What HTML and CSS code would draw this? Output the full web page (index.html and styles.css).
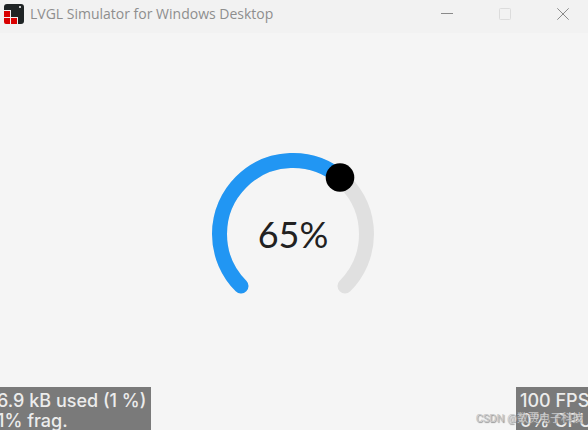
FILE: index.html
```
<!DOCTYPE html>
<html lang="en">
<head>
    <meta charset="UTF-8">
    <meta name="viewport" content="width=device-width, initial-scale=1.0">
    <title>LVGL Simulator for Windows Desktop</title>
    <link rel="stylesheet" href="styles.css">
</head>
<body>
    <header class="titlebar">
        <svg class="logo" viewBox="0 0 20 20" aria-hidden="true">
            <rect x="0" y="0" width="20" height="20" rx="3" fill="#1f2425"/>
            <rect x="15" y="2" width="2" height="2" rx="1" fill="#fff"/>
            <path d="M0 6H7V13H14V20H0Z" fill="#f2f2f2"/>
            <path d="M0 7H6V13H0ZM0 14H6V20H2Q0 20 0 18ZM7 14H13V20H7Z" fill="#d90000"/>
        </svg>
        <h1 class="title">LVGL Simulator for Windows Desktop</h1>
        <div class="window-buttons">
            <button type="button" aria-label="Minimize">
                <svg viewBox="0 0 12 12"><path d="M0 5.5H12"/></svg>
            </button>
            <button type="button" aria-label="Maximize" disabled>
                <svg viewBox="0 0 12 12"><rect x="0.5" y="0.5" width="11" height="11" rx="1"/></svg>
            </button>
            <button type="button" aria-label="Close">
                <svg viewBox="0 0 12 12"><path d="M0.3 0.3L11.7 11.7M11.7 0.3L0.3 11.7"/></svg>
            </button>
        </div>
    </header>

    <main class="screen">
        <div class="gauge">
            <svg class="arc" viewBox="0 0 162 162" aria-hidden="true">
                <path class="track" d="M29 133A73.5 73.5 0 1 1 133 133"/>
                <path class="value" pathLength="100" d="M29 133A73.5 73.5 0 1 1 133 133"/>
                <circle cx="128" cy="24.5" r="14.3"/>
            </svg>
            <span class="percent">65%</span>
        </div>
    </main>

    <footer class="monitors">
        <div class="monitor memory">6.9 kB used (1 %)<br>1% frag.</div>
        <div class="monitor perf">100 FPS<br>0% CPU</div>
        <span class="watermark">CSDN @数贾电子科技</span>
    </footer>
</body>
</html>
```
FILE: styles.css
```
body {
    margin: 0;
    height: 100vh;
    display: flex;
    flex-direction: column;
    position: relative;
    overflow: hidden;
    background: #f5f5f5;
    font-family: "Open Sans", "Noto Sans", sans-serif;
}
.titlebar {
    display: flex;
    align-items: center;
    height: 33px;
    padding: 0 2px 5px 4px;
    box-sizing: border-box;
    background: #f2f2f2;
}
.logo {
    width: 20px;
    height: 20px;
}
.title {
    flex: 1;
    margin: 0 0 0 6px;
    font-size: 14px;
    line-height: 20px;
    font-weight: 400;
    color: #8e8e8e;
    white-space: nowrap;
}
.window-buttons {
    display: flex;
    gap: 12px;
}
.window-buttons button {
    display: flex;
    justify-content: center;
    align-items: center;
    width: 46px;
    height: 28px;
    padding: 0;
    border: none;
    background: none;
}
.window-buttons svg {
    width: 12px;
    height: 12px;
    fill: none;
    stroke: #8a8a8a;
    stroke-width: 1;
}
.window-buttons button:disabled svg {
    stroke: #dcdcdc;
}
.screen {
    flex: 1;
    display: flex;
    justify-content: center;
    align-items: center;
    padding: 5px 2px 0 0;
}
.gauge {
    display: grid;
    place-items: center;
}
.arc,
.percent {
    grid-area: 1 / 1;
}
.arc {
    width: 162px;
    height: 162px;
}
.track,
.value {
    fill: none;
    stroke-width: 15;
    stroke-linecap: round;
}
.track { stroke: #e0e0e0; }
.value {
    stroke: #2196f3;
    stroke-dasharray: 65 100;
}
.percent {
    font-family: Lato, sans-serif;
    font-size: 36px;
    line-height: 40px;
    color: #212121;
}
/* debug monitors lie over the bottom corners of the screen */
.monitors {
    position: absolute;
    left: 0;
    right: 0;
    bottom: 0;
    display: flex;
    justify-content: space-between;
}
.monitor {
    height: 43px;
    padding-top: 4px;
    box-sizing: border-box;
    overflow: hidden;
    background: #7a7a7a;
    color: #ececec;
    font-family: Inter, sans-serif;
    font-size: 18px;
    line-height: 20px;
    font-weight: 500;
    white-space: nowrap;
}
.memory {
    width: 154px;
    margin-left: -3px;
}
.perf {
    width: 72px;
    padding-left: 4px;
}
.watermark {
    position: absolute;
    right: 5px;
    bottom: 3px;
    font-family: Roboto, "Noto Sans CJK SC", sans-serif;
    font-size: 11px;
    line-height: 16px;
    color: #c8c8c8;
    text-shadow: 1px 1px 1px #888;
}
```
